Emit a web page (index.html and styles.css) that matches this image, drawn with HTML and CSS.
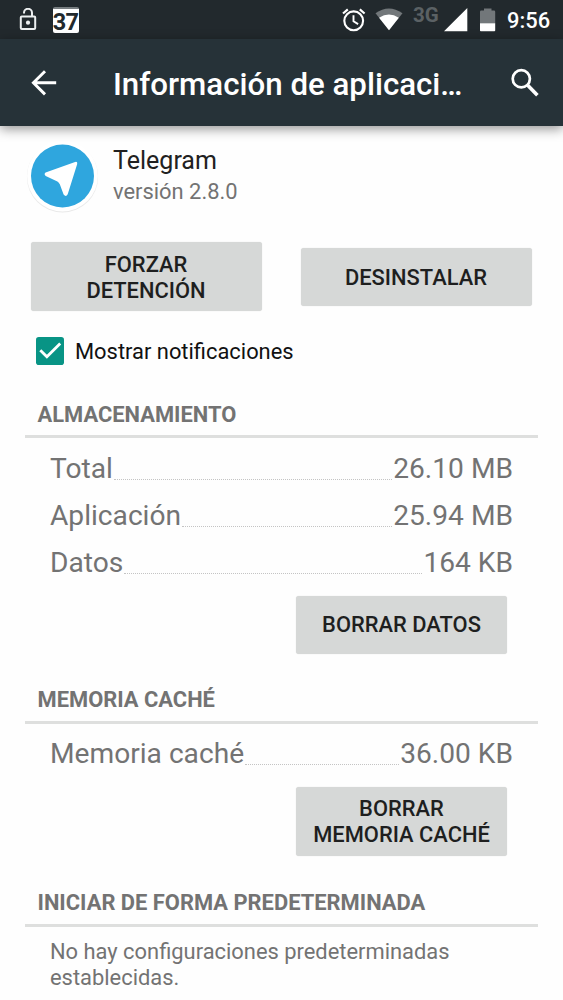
FILE: index.html
```html
<!DOCTYPE html>
<html lang="es">
<head>
<meta charset="utf-8">
<title>Información de aplicación</title>
<link rel="stylesheet" href="styles.css">
</head>
<body>
<div class="status-bar">
  <svg class="lock" width="18" height="24" viewBox="0 0 18 24" fill="none" stroke="#eceff0" stroke-width="2"><rect x="1.8" y="8.4" width="14.4" height="12.6" rx="1"/><path d="M5 5.4V4.8a4 4 0 0 1 8 0V8.5"/><circle cx="9" cy="14.7" r="2.1" fill="#eceff0" stroke="none"/></svg>
  <div class="day-badge">37</div>
  <div class="spacer"></div>
  <svg class="alarm" width="24" height="26" viewBox="0 0 24 26" fill="none" stroke="#fff"><circle cx="11.7" cy="12.8" r="9.4" stroke-width="2.1"/><path d="M11.5 7.2v6.1l4.6 2.8" stroke-width="1.9"/><path d="M1 5.5l4.8-4.1M17.8 1.4l4.8 4.1" stroke-width="2.2"/></svg>
  <svg class="wifi" width="28" height="24" viewBox="0 0 28 24"><path d="M.5 5.2Q13.8-4.3 27.5 5.2L14 22z" fill="#72777a"/><path d="M4.1 9.7Q13.9 3.3 23.8 9.7L14 22.2z" fill="#fff"/></svg>
  <span class="network">3G</span>
  <svg class="signal" width="24" height="24" viewBox="0 0 24 24"><path d="M23.3.1v23.2H0z" fill="#fff"/></svg>
  <svg class="battery" width="16" height="24" viewBox="0 0 16 24"><path d="M0 3.8Q0 2.6 1.2 2.6H4V.4h7.5v2.2H14q1.2 0 1.2 1.2v11.7H0z" fill="#72777a"/><path d="M0 15.3h15.2v7.2q0 .8-.8.8H.8q-.8 0-.8-.8z" fill="#fff"/></svg>
  <span class="clock">9:56</span>
</div>
<header class="toolbar">
  <svg class="back" width="26" height="26" viewBox="0 0 26 26" fill="none" stroke="#fff" stroke-width="2.9"><path d="M25.2 12.8H3M14 1.2L2.4 12.8 14 24.4"/></svg>
  <h1 class="title">Información de aplicaci…</h1>
  <svg class="search" width="30" height="30" viewBox="0 0 30 30" fill="none" stroke="#fff"><circle cx="11.3" cy="10.8" r="8.6" stroke-width="2.7"/><path d="M17.2 16.8l10.2 10.4" stroke-width="3.6"/></svg>
</header>
<main class="content">
  <section class="app">
    <svg class="app-icon" width="76" height="76" viewBox="0 0 76 76"><circle cx="37.5" cy="37.8" r="35.6" fill="#e9e9e9"/><circle cx="37.5" cy="37" r="35.4" fill="#fff"/><circle cx="37.5" cy="37" r="31.5" fill="#2fa6de"/><path d="M20.6 33.4L50.1 22.9q2.6-.7 2.1 2.1L42.7 55.2q-1.7 3.2-4.1.3l-3.8-10.2q-.8-1.7-2.4-2.7l-11.7-5.7q-2.1-1.9-.1-3.5z" fill="#fff"/></svg>
    <div class="app-text">
      <div class="app-name">Telegram</div>
      <div class="app-version">versión 2.8.0</div>
    </div>
  </section>
  <div class="actions">
    <button class="button wide tall force">FORZAR<br>DETENCIÓN</button>
    <button class="button wide uninstall">DESINSTALAR</button>
  </div>
  <label class="notify">
    <svg class="check" width="28" height="28" viewBox="0 0 28 28"><rect width="28" height="28" rx="2.8" fill="#089485"/><path d="M4.3 13.2l6.6 6.6L24.2 6.6" fill="none" stroke="#fff" stroke-width="2.8"/></svg>
    <span>Mostrar notificaciones</span>
  </label>
  <section class="group">
    <h2 class="heading">ALMACENAMIENTO</h2>
    <div class="row"><span>Total</span><i class="leader"></i><span>26.10 MB</span></div>
    <div class="row"><span>Aplicación</span><i class="leader"></i><span>25.94 MB</span></div>
    <div class="row"><span>Datos</span><i class="leader"></i><span>164 KB</span></div>
    <button class="button clear data">BORRAR DATOS</button>
  </section>
  <section class="group cache">
    <h2 class="heading">MEMORIA CACHÉ</h2>
    <div class="row"><span>Memoria caché</span><i class="leader"></i><span>36.00 KB</span></div>
    <button class="button clear tall">BORRAR<br>MEMORIA CACHÉ</button>
  </section>
  <section class="group defaults">
    <h2 class="heading">INICIAR DE FORMA PREDETERMINADA</h2>
    <p class="note">No hay configuraciones predeterminadas establecidas.</p>
  </section>
</main>
</body>
</html>
```

FILE: styles.css
```css
* { box-sizing: border-box; }
body {
  margin: 0;
  width: 563px;
  height: 1000px;
  overflow: hidden;
  background: #fefefe;
  color: #737373;
  font-family: Roboto, sans-serif;
  font-size: 21.9px;
}
svg { display: block; flex: none; }
.status-bar {
  height: 39px;
  display: flex;
  align-items: flex-start;
  padding: 8px 13px 0 19px;
  background: #22292d;
  color: #fff;
}
.spacer { flex: 1; }
.day-badge {
  width: 26px;
  height: 26px;
  margin: -1px 0 0 15.5px;
  border-top: 2px solid #777d80;
  border-radius: 2px;
  background: #fff;
  color: #22292d;
  font-size: 23.5px;
  font-weight: 700;
  line-height: 26px;
  text-align: center;
  letter-spacing: -.8px;
}
.alarm { margin-right: 9px; }
.wifi { margin-right: 10px; }
.network {
  width: 30px;
  color: #5b6164;
  font-size: 20.5px;
  font-weight: 700;
  line-height: 24px;
  margin-top: -5px;
}
.signal { margin: 0 11px 0 1px; }
.battery { margin: 0 11px 0 1px; }
.clock { width: 43px; margin-top: 1px; font-size: 21.9px; font-weight: 500; line-height: 24px; white-space: nowrap; }
.toolbar {
  position: relative;
  height: 87px;
  display: flex;
  align-items: center;
  padding: 0 23px 0 31px;
  background: #263238;
  box-shadow: 0 3px 11px rgba(0, 0, 0, .42);
}
.title {
  flex: 1;
  margin: 4px 0 0 56px;
  color: #fff;
  font-size: 31.28px;
  font-weight: 500;
  line-height: 41px;
  white-space: nowrap;
}
.app { display: flex; padding: 13px 25px 0; height: 116px; }
.app-text { margin: 6px 0 0 12px; }
.app-name { color: #212121; font-size: 25.03px; line-height: 31px; }
.app-version { line-height: 31px; }
.actions {
  display: flex;
  align-items: center;
  justify-content: space-between;
  height: 69px;
  padding: 0 31px;
}
.button {
  height: 58px;
  padding: 1px 0 0;
  border: 0;
  border-radius: 3px;
  background: #d6d8d7;
  box-shadow: 0 0 1px rgba(0, 0, 0, .18);
  color: #1e1f1f;
  font: 500 21.9px/26px Roboto, sans-serif;
}
.wide { width: 231px; }
.tall { height: 69px; }
.force, .uninstall { padding: 3px 1px 0 0; }
.data { padding-top: 0; }
.notify {
  display: flex;
  align-items: center;
  gap: 11px;
  margin: 26px 0 0 36px;
  height: 28px;
  color: #111;
}
.group { padding: 0 25px; margin-top: 34px; }
.heading {
  height: 39px;
  margin: 0 0 7px;
  padding-left: 12.5px;
  border-bottom: 3px solid #dedfde;
  font-size: 21.9px;
  font-weight: 700;
  line-height: 31px;
}
.row {
  display: flex;
  height: 47px;
  padding: 0 25px;
  font-size: 28.15px;
  line-height: 47px;
}
.leader { flex: 1; height: 34.5px; margin: 0 1px; border-bottom: 1px dotted #c4c4c4; }
.clear { display: block; width: 211px; margin: 10px 0 0 271px; }
.cache { margin-top: 30px; }
.cache .heading { height: 40px; margin-bottom: 6px; }
.defaults { margin-top: 31px; }
.defaults .heading { height: 40px; }
.note { margin: 0; padding: 5px 25px 0; line-height: 25.7px; }
```
